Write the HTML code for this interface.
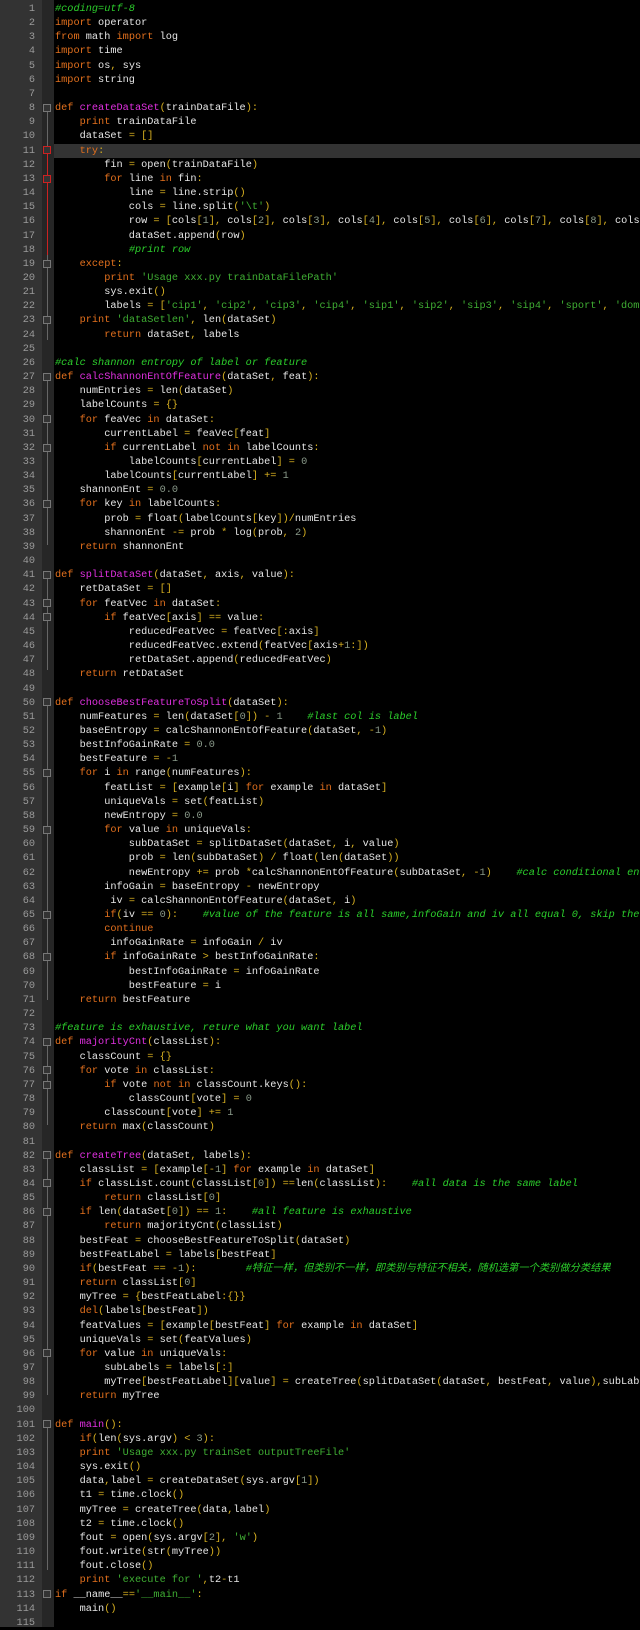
<!DOCTYPE html>
<html><head><meta charset="utf-8"><style>
html,body{margin:0;padding:0;background:#000;}
body{width:640px;height:1627px;overflow:hidden;position:relative;font-family:"Liberation Mono","Noto Sans CJK SC",monospace;font-size:10.25px;}
#gut{position:absolute;left:0;top:0;width:42px;height:1627px;background:#333;}
#fold{position:absolute;left:42px;top:0;width:12px;height:1627px;background:#262626;}
#nums{position:absolute;left:0;top:2px;width:35px;text-align:right;color:#9a9a9a;line-height:14.15px;white-space:pre;}
#hl{position:absolute;left:54px;top:143.5px;width:586px;height:14.15px;background:#333;}
#code{position:absolute;left:55px;top:2px;width:585px;overflow:hidden;color:#e6e6e6;white-space:pre;margin:0;font-family:"Liberation Mono","Noto Sans CJK SC",monospace;font-size:10.25px;line-height:14.15px;}
.k{color:#e3701d}.f{color:#e030e0}.b{color:#d8b020}.s{color:#3fae33}.c{color:#2ccf2c;font-style:italic}.n{color:#8a9a8a}
.fb{position:absolute;left:43px;width:8px;height:8px;border:1px solid #777;box-sizing:border-box;background:#333}
.fb.r{border-color:#c22}
.vl{position:absolute;left:47px;width:1px;background:#666}
</style></head><body>
<div id="gut"></div><div id="fold"></div>
<div id="hl"></div>
<div class="vl" style="top:112px;height:228px"></div>
<div class="vl" style="top:154px;height:101px;background:#c22"></div>
<div class="vl" style="top:381px;height:164px"></div>
<div class="vl" style="top:579px;height:91px"></div>
<div class="vl" style="top:706px;height:294px"></div>
<div class="vl" style="top:1046px;height:79px"></div>
<div class="vl" style="top:1159px;height:236px"></div>
<div class="vl" style="top:1428px;height:142px"></div>
<div class="fb" style="top:104px"></div>
<div class="fb r" style="top:146px"></div>
<div class="fb r" style="top:175px"></div>
<div class="fb" style="top:260px"></div>
<div class="fb" style="top:316px"></div>
<div class="fb" style="top:373px"></div>
<div class="fb" style="top:415px"></div>
<div class="fb" style="top:444px"></div>
<div class="fb" style="top:500px"></div>
<div class="fb" style="top:571px"></div>
<div class="fb" style="top:599px"></div>
<div class="fb" style="top:613px"></div>
<div class="fb" style="top:698px"></div>
<div class="fb" style="top:769px"></div>
<div class="fb" style="top:826px"></div>
<div class="fb" style="top:911px"></div>
<div class="fb" style="top:953px"></div>
<div class="fb" style="top:1038px"></div>
<div class="fb" style="top:1066px"></div>
<div class="fb" style="top:1081px"></div>
<div class="fb" style="top:1151px"></div>
<div class="fb" style="top:1179px"></div>
<div class="fb" style="top:1208px"></div>
<div class="fb" style="top:1349px"></div>
<div class="fb" style="top:1420px"></div>
<div class="fb" style="top:1590px"></div>
<div id="nums">1
2
3
4
5
6
7
8
9
10
11
12
13
14
15
16
17
18
19
20
21
22
23
24
25
26
27
28
29
30
31
32
33
34
35
36
37
38
39
40
41
42
43
44
45
46
47
48
49
50
51
52
53
54
55
56
57
58
59
60
61
62
63
64
65
66
67
68
69
70
71
72
73
74
75
76
77
78
79
80
81
82
83
84
85
86
87
88
89
90
91
92
93
94
95
96
97
98
99
100
101
102
103
104
105
106
107
108
109
110
111
112
113
114
115</div>
<pre id="code"><span class="c">#coding=utf-8</span>
<span class="k">import</span> operator
<span class="k">from</span> math <span class="k">import</span> log
<span class="k">import</span> time
<span class="k">import</span> os<span class="b">,</span> sys
<span class="k">import</span> string

<span class="k">def</span> <span class="f">createDataSet</span><span class="b">(</span>trainDataFile<span class="b">):</span>
    <span class="k">print</span> trainDataFile
    dataSet <span class="b">= []</span>
    <span class="k">try</span><span class="b">:</span>
        fin <span class="b">=</span> open<span class="b">(</span>trainDataFile<span class="b">)</span>
        <span class="k">for</span> line <span class="k">in</span> fin<span class="b">:</span>
            line <span class="b">=</span> line.strip<span class="b">()</span>
            cols <span class="b">=</span> line.split<span class="b">(</span><span class="s">'\t'</span><span class="b">)</span>
            row <span class="b">= [</span>cols<span class="b">[</span><span class="n">1</span><span class="b">],</span> cols<span class="b">[</span><span class="n">2</span><span class="b">],</span> cols<span class="b">[</span><span class="n">3</span><span class="b">],</span> cols<span class="b">[</span><span class="n">4</span><span class="b">],</span> cols<span class="b">[</span><span class="n">5</span><span class="b">],</span> cols<span class="b">[</span><span class="n">6</span><span class="b">],</span> cols<span class="b">[</span><span class="n">7</span><span class="b">],</span> cols<span class="b">[</span><span class="n">8</span><span class="b">],</span> cols<span class="b">[</span><span class="n">9</span><span class="b">]]</span>
            dataSet.append<span class="b">(</span>row<span class="b">)</span>
            <span class="c">#print row</span>
    <span class="k">except</span><span class="b">:</span>
        <span class="k">print</span> <span class="s">'Usage xxx.py trainDataFilePath'</span>
        sys.exit<span class="b">()</span>
        labels <span class="b">= [</span><span class="s">'cip1'</span><span class="b">,</span> <span class="s">'cip2'</span><span class="b">,</span> <span class="s">'cip3'</span><span class="b">,</span> <span class="s">'cip4'</span><span class="b">,</span> <span class="s">'sip1'</span><span class="b">,</span> <span class="s">'sip2'</span><span class="b">,</span> <span class="s">'sip3'</span><span class="b">,</span> <span class="s">'sip4'</span><span class="b">,</span> <span class="s">'sport'</span><span class="b">,</span> <span class="s">'domain'</span><span class="b">]</span>
    <span class="k">print</span> <span class="s">'dataSetlen'</span><span class="b">,</span> len<span class="b">(</span>dataSet<span class="b">)</span>
        <span class="k">return</span> dataSet<span class="b">,</span> labels

<span class="c">#calc shannon entropy of label or feature</span>
<span class="k">def</span> <span class="f">calcShannonEntOfFeature</span><span class="b">(</span>dataSet<span class="b">,</span> feat<span class="b">):</span>
    numEntries <span class="b">=</span> len<span class="b">(</span>dataSet<span class="b">)</span>
    labelCounts <span class="b">= {}</span>
    <span class="k">for</span> feaVec <span class="k">in</span> dataSet<span class="b">:</span>
        currentLabel <span class="b">=</span> feaVec<span class="b">[</span>feat<span class="b">]</span>
        <span class="k">if</span> currentLabel <span class="k">not in</span> labelCounts<span class="b">:</span>
            labelCounts<span class="b">[</span>currentLabel<span class="b">] =</span> <span class="n">0</span>
        labelCounts<span class="b">[</span>currentLabel<span class="b">] +=</span> <span class="n">1</span>
    shannonEnt <span class="b">=</span> <span class="n">0.0</span>
    <span class="k">for</span> key <span class="k">in</span> labelCounts<span class="b">:</span>
        prob <span class="b">=</span> float<span class="b">(</span>labelCounts<span class="b">[</span>key<span class="b">])/</span>numEntries
        shannonEnt <span class="b">-=</span> prob <span class="b">*</span> log<span class="b">(</span>prob<span class="b">,</span> <span class="n">2</span><span class="b">)</span>
    <span class="k">return</span> shannonEnt

<span class="k">def</span> <span class="f">splitDataSet</span><span class="b">(</span>dataSet<span class="b">,</span> axis<span class="b">,</span> value<span class="b">):</span>
    retDataSet <span class="b">= []</span>
    <span class="k">for</span> featVec <span class="k">in</span> dataSet<span class="b">:</span>
        <span class="k">if</span> featVec<span class="b">[</span>axis<span class="b">] ==</span> value<span class="b">:</span>
            reducedFeatVec <span class="b">=</span> featVec<span class="b">[:</span>axis<span class="b">]</span>
            reducedFeatVec.extend<span class="b">(</span>featVec<span class="b">[</span>axis<span class="b">+</span><span class="n">1</span><span class="b">:])</span>
            retDataSet.append<span class="b">(</span>reducedFeatVec<span class="b">)</span>
    <span class="k">return</span> retDataSet

<span class="k">def</span> <span class="f">chooseBestFeatureToSplit</span><span class="b">(</span>dataSet<span class="b">):</span>
    numFeatures <span class="b">=</span> len<span class="b">(</span>dataSet<span class="b">[</span><span class="n">0</span><span class="b">]) -</span> <span class="n">1</span>    <span class="c">#last col is label</span>
    baseEntropy <span class="b">=</span> calcShannonEntOfFeature<span class="b">(</span>dataSet<span class="b">, -</span><span class="n">1</span><span class="b">)</span>
    bestInfoGainRate <span class="b">=</span> <span class="n">0.0</span>
    bestFeature <span class="b">= -</span><span class="n">1</span>
    <span class="k">for</span> i <span class="k">in</span> range<span class="b">(</span>numFeatures<span class="b">):</span>
        featList <span class="b">= [</span>example<span class="b">[</span>i<span class="b">]</span> <span class="k">for</span> example <span class="k">in</span> dataSet<span class="b">]</span>
        uniqueVals <span class="b">=</span> set<span class="b">(</span>featList<span class="b">)</span>
        newEntropy <span class="b">=</span> <span class="n">0.0</span>
        <span class="k">for</span> value <span class="k">in</span> uniqueVals<span class="b">:</span>
            subDataSet <span class="b">=</span> splitDataSet<span class="b">(</span>dataSet<span class="b">,</span> i<span class="b">,</span> value<span class="b">)</span>
            prob <span class="b">=</span> len<span class="b">(</span>subDataSet<span class="b">) /</span> float<span class="b">(</span>len<span class="b">(</span>dataSet<span class="b">))</span>
            newEntropy <span class="b">+=</span> prob <span class="b">*</span>calcShannonEntOfFeature<span class="b">(</span>subDataSet<span class="b">, -</span><span class="n">1</span><span class="b">)</span>    <span class="c">#calc conditional entropy</span>
        infoGain <span class="b">=</span> baseEntropy <span class="b">-</span> newEntropy
         iv <span class="b">=</span> calcShannonEntOfFeature<span class="b">(</span>dataSet<span class="b">,</span> i<span class="b">)</span>
        <span class="k">if</span><span class="b">(</span>iv <span class="b">==</span> <span class="n">0</span><span class="b">):</span>    <span class="c">#value of the feature is all same,infoGain and iv all equal 0, skip the feature</span>
        <span class="k">continue</span>
         infoGainRate <span class="b">=</span> infoGain <span class="b">/</span> iv
        <span class="k">if</span> infoGainRate <span class="b">&gt;</span> bestInfoGainRate<span class="b">:</span>
            bestInfoGainRate <span class="b">=</span> infoGainRate
            bestFeature <span class="b">=</span> i
    <span class="k">return</span> bestFeature

<span class="c">#feature is exhaustive, reture what you want label</span>
<span class="k">def</span> <span class="f">majorityCnt</span><span class="b">(</span>classList<span class="b">):</span>
    classCount <span class="b">= {}</span>
    <span class="k">for</span> vote <span class="k">in</span> classList<span class="b">:</span>
        <span class="k">if</span> vote <span class="k">not in</span> classCount.keys<span class="b">():</span>
            classCount<span class="b">[</span>vote<span class="b">] =</span> <span class="n">0</span>
        classCount<span class="b">[</span>vote<span class="b">] +=</span> <span class="n">1</span>
    <span class="k">return</span> max<span class="b">(</span>classCount<span class="b">)</span>

<span class="k">def</span> <span class="f">createTree</span><span class="b">(</span>dataSet<span class="b">,</span> labels<span class="b">):</span>
    classList <span class="b">= [</span>example<span class="b">[-</span><span class="n">1</span><span class="b">]</span> <span class="k">for</span> example <span class="k">in</span> dataSet<span class="b">]</span>
    <span class="k">if</span> classList.count<span class="b">(</span>classList<span class="b">[</span><span class="n">0</span><span class="b">]) ==</span>len<span class="b">(</span>classList<span class="b">):</span>    <span class="c">#all data is the same label</span>
        <span class="k">return</span> classList<span class="b">[</span><span class="n">0</span><span class="b">]</span>
    <span class="k">if</span> len<span class="b">(</span>dataSet<span class="b">[</span><span class="n">0</span><span class="b">]) ==</span> <span class="n">1</span><span class="b">:</span>    <span class="c">#all feature is exhaustive</span>
        <span class="k">return</span> majorityCnt<span class="b">(</span>classList<span class="b">)</span>
    bestFeat <span class="b">=</span> chooseBestFeatureToSplit<span class="b">(</span>dataSet<span class="b">)</span>
    bestFeatLabel <span class="b">=</span> labels<span class="b">[</span>bestFeat<span class="b">]</span>
    <span class="k">if</span><span class="b">(</span>bestFeat <span class="b">== -</span><span class="n">1</span><span class="b">):</span>        <span class="c">#特征一样，但类别不一样，即类别与特征不相关，随机选第一个类别做分类结果</span>
    <span class="k">return</span> classList<span class="b">[</span><span class="n">0</span><span class="b">]</span>
    myTree <span class="b">= {</span>bestFeatLabel<span class="b">:{}}</span>
    <span class="k">del</span><span class="b">(</span>labels<span class="b">[</span>bestFeat<span class="b">])</span>
    featValues <span class="b">= [</span>example<span class="b">[</span>bestFeat<span class="b">]</span> <span class="k">for</span> example <span class="k">in</span> dataSet<span class="b">]</span>
    uniqueVals <span class="b">=</span> set<span class="b">(</span>featValues<span class="b">)</span>
    <span class="k">for</span> value <span class="k">in</span> uniqueVals<span class="b">:</span>
        subLabels <span class="b">=</span> labels<span class="b">[:]</span>
        myTree<span class="b">[</span>bestFeatLabel<span class="b">][</span>value<span class="b">] =</span> createTree<span class="b">(</span>splitDataSet<span class="b">(</span>dataSet<span class="b">,</span> bestFeat<span class="b">,</span> value<span class="b">),</span>subLabels<span class="b">)</span>
    <span class="k">return</span> myTree

<span class="k">def</span> <span class="f">main</span><span class="b">():</span>
    <span class="k">if</span><span class="b">(</span>len<span class="b">(</span>sys.argv<span class="b">) &lt;</span> <span class="n">3</span><span class="b">):</span>
    <span class="k">print</span> <span class="s">'Usage xxx.py trainSet outputTreeFile'</span>
    sys.exit<span class="b">()</span>
    data<span class="b">,</span>label <span class="b">=</span> createDataSet<span class="b">(</span>sys.argv<span class="b">[</span><span class="n">1</span><span class="b">])</span>
    t1 <span class="b">=</span> time.clock<span class="b">()</span>
    myTree <span class="b">=</span> createTree<span class="b">(</span>data<span class="b">,</span>label<span class="b">)</span>
    t2 <span class="b">=</span> time.clock<span class="b">()</span>
    fout <span class="b">=</span> open<span class="b">(</span>sys.argv<span class="b">[</span><span class="n">2</span><span class="b">],</span> <span class="s">'w'</span><span class="b">)</span>
    fout.write<span class="b">(</span>str<span class="b">(</span>myTree<span class="b">))</span>
    fout.close<span class="b">()</span>
    <span class="k">print</span> <span class="s">'execute for '</span><span class="b">,</span>t2<span class="b">-</span>t1
<span class="k">if</span> __name__<span class="b">==</span><span class="s">'__main__'</span><span class="b">:</span>
    main<span class="b">()</span>
</pre>
</body></html>
